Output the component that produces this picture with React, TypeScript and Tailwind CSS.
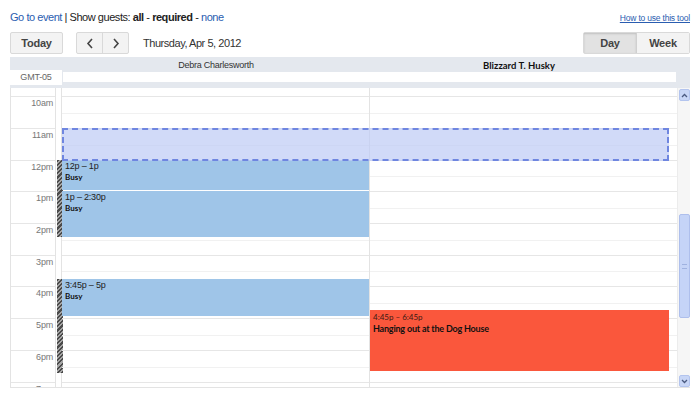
import React from 'react'

// hour rows in the day grid (top line y of each row, relative to grid body)
const hours = [
  { label: '10am', h: 32 },
  { label: '11am', h: 32 },
  { label: '12pm', h: 31 },
  { label: '1pm', h: 32 },
  { label: '2pm', h: 32 },
  { label: '3pm', h: 31 },
  { label: '4pm', h: 32 },
  { label: '5pm', h: 32 },
  { label: '6pm', h: 32 },
  { label: '7pm', h: 32 },
]

const sans = "font-['Liberation_Sans',Arial,sans-serif]"
const cal = "font-['Lato','Liberation_Sans',sans-serif]"

const Toolbar: React.FC = () => (
  <div className="flex items-center h-[22px] mt-[8px]">
    <button className="w-[53px] h-[22px] rounded-[2px] border border-[#d9d9d9] bg-[#f3f3f3] text-[11px] font-bold text-[#444] tracking-[-0.2px]">
      Today
    </button>
    <div className="ml-[13px] flex h-[22px] rounded-[2px] border border-[#d9d9d9] bg-[#f3f3f3]">
      <button className="w-[26px] flex items-center justify-center border-r border-[#d9d9d9]">
        <svg width="8" height="11" viewBox="0 0 8 11"><path d="M6 1L2 5.5L6 10" stroke="#444" strokeWidth="1.6" fill="none" /></svg>
      </button>
      <button className="w-[25px] flex items-center justify-center">
        <svg width="8" height="11" viewBox="0 0 8 11"><path d="M2 1L6 5.5L2 10" stroke="#444" strokeWidth="1.6" fill="none" /></svg>
      </button>
    </div>
    <div className="ml-[14px] text-[11px] tracking-[-0.45px] text-[#333]">Thursday, Apr 5, 2012</div>
    <div className="ml-auto flex h-[22px] rounded-[2px] border border-[#d9d9d9] text-[11px] font-bold text-[#444] tracking-[-0.2px]">
      <button className="w-[53px] bg-[#e2e2e2] shadow-[inset_0_1px_2px_rgba(0,0,0,0.15)] border-r border-[#d0d0d0]">Day</button>
      <button className="w-[52px] bg-[#f3f3f3]">Week</button>
    </div>
  </div>
)

const Header: React.FC = () => (
  <div className="mt-[3px] h-[31px] bg-[#e4e8ee] relative">
    <div className="flex h-[16px] items-center">
      <div className="w-[52px]" />
      <div className="w-[308px] text-center text-[9px] tracking-[-0.25px] text-[#333] pt-[1px]">Debra Charlesworth</div>
      <div className={`w-[298px] text-center text-[9.5px] font-bold text-[#111] pt-[2px] ${cal}`}>Blizzard T. Husky</div>
    </div>
    <div className="flex">
      <div className="w-[52px] h-[15px] -mt-[3px] bg-white flex items-center justify-center text-[9px] tracking-[-0.2px] text-[#666]">GMT-05</div>
      <div className="ml-[1px] w-[613px] h-[10px] -mt-[1px] bg-white" />
    </div>
  </div>
)

const Hatch: React.FC<{ top: number; h: number }> = ({ top, h }) => (
  <div
    className="absolute left-[1px] w-[6px] bg-[repeating-linear-gradient(135deg,#4a4a4a_0px,#4a4a4a_1.5px,#a5a5a5_1.5px,#a5a5a5_3px)]"
    style={{ top, height: h }}
  />
)

const Busy: React.FC<{ top: number; h: number; time: string }> = ({ top, h, time }) => (
  <div className="absolute left-0 w-[307px] bg-[#9fc5e8] px-[3px] pt-[1px]" style={{ top, height: h }}>
    <div className="text-[9px] leading-[11px] tracking-[-0.2px] text-[#222]">{time}</div>
    <div className={`text-[8px] leading-[10px] font-bold text-[#111] ${cal}`}>Busy</div>
  </div>
)

const Grid: React.FC = () => (
  <div className="flex h-[300px] overflow-hidden border-b border-[#e3e3e3]">
    {/* time labels */}
    <div className="w-[45px] border-l border-[#e3e3e3]">
      <div className="h-[8px]" />
      {hours.map((r) => (
        <div key={r.label} className="border-t border-[#e6e6e6] text-right pr-[2px] text-[9px] leading-[12px] tracking-[-0.2px] text-[#777]" style={{ height: r.h }}>
          {r.label}
        </div>
      ))}
    </div>
    {/* busy strip */}
    <div className="w-[7px] relative border-x border-[#e3e3e3]">
      <Hatch top={72} h={77} />
      <Hatch top={191} h={94} />
    </div>
    {/* day columns */}
    <div className="w-[615px] relative">
      <div className="h-[8px]" />
      {hours.map((r) => (
        <div key={r.label} className="border-t border-[#e6e6e6] relative" style={{ height: r.h }}>
          <div className="absolute left-0 right-0 top-[50%] border-t border-[#f1f1f1]" />
        </div>
      ))}
      <div className="absolute top-0 bottom-0 left-[307px] border-l border-[#e3e3e3]" />

      <Busy top={72} h={30} time="12p – 1p" />
      <Busy top={103} h={46} time="1p – 2:30p" />
      <Busy top={191} h={37} time="3:45p – 5p" />

      <div className="absolute left-[308px] top-[222px] w-[299px] h-[61px] bg-[#fa573c] px-[3px] pt-[2px]">
        <div className={`text-[8px] leading-[11px] text-[#3a1a14] ${cal}`}>4:45p – 6:45p</div>
        <div className={`text-[9px] leading-[12px] tracking-[-0.2px] font-bold text-[#111] ${cal}`}>Hanging out at the Dog House</div>
      </div>

      {/* selected slot */}
      <div className="absolute left-0 top-[40px] w-[607px] h-[33px] bg-[rgba(190,202,245,0.7)] border-2 border-dashed border-[#6f86e0]" />
    </div>
    {/* scrollbar */}
    <div className="w-[13px] relative bg-[#f6f6f6] border-l border-[#ececec]">
      <div className="absolute left-[1px] top-[1px] w-[11px] h-[12px] rounded-[2px] bg-[#c8d6f6] border border-[#b3c4ee] flex items-center justify-center">
        <svg width="7" height="5" viewBox="0 0 7 5"><path d="M1 4L3.5 1.5L6 4" stroke="#4a5a80" strokeWidth="1.3" fill="none" /></svg>
      </div>
      <div className="absolute left-[1px] top-[126px] w-[11px] h-[104px] rounded-[2px] bg-[#c5d4f7] border border-[#aebfec] flex items-center justify-center">
        <div className="w-[5px] h-[5px] border-y border-[#9fb2e0]" />
      </div>
      <div className="absolute left-[1px] top-[287px] w-[11px] h-[12px] rounded-[2px] bg-[#c8d6f6] border border-[#b3c4ee] flex items-center justify-center">
        <svg width="7" height="5" viewBox="0 0 7 5"><path d="M1 1L3.5 3.5L6 1" stroke="#4a5a80" strokeWidth="1.3" fill="none" /></svg>
      </div>
    </div>
  </div>
)

const App: React.FC = () => {
  return (
    <div className={`w-[700px] h-[394px] bg-white px-[10px] overflow-hidden ${sans}`}>
      <div className="flex items-end justify-between h-[24px]">
        <div className="text-[11px] tracking-[-0.45px] text-[#222] leading-[14px]">
          <a className="text-[#2a5db0]">Go to event</a> | Show guests: <b>all</b> - <b>required</b> -{' '}
          <a className="text-[#2a5db0]">none</a>
        </div>
        <a className="text-[8.5px] tracking-[-0.2px] text-[#2a5db0] underline leading-[12px]">How to use this tool</a>
      </div>
      <Toolbar />
      <Header />
      <Grid />
    </div>
  )
}

export default App
